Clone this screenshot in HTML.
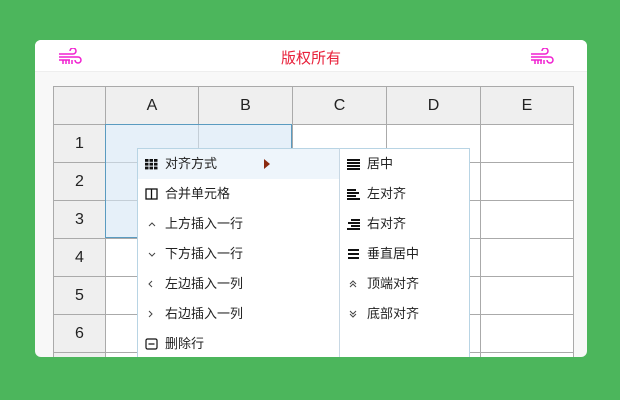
<!DOCTYPE html>
<html><head><meta charset="utf-8"><style>
body{margin:0;width:620px;height:400px;background:#4cb65c;position:relative;overflow:hidden;font-family:"Liberation Sans","Microsoft YaHei","Noto Sans CJK SC",sans-serif;}
.card{position:absolute;left:35px;top:40px;width:552px;height:317px;background:#f8f8f8;border-radius:6px;overflow:hidden}
.hdr{position:absolute;left:0;top:0;width:552px;height:31px;background:#fff;border-bottom:1px solid #eee}
.title{position:absolute;left:0;right:0;top:7px;text-align:center;color:#e8203a;font-size:15px}
table{position:absolute;left:18px;top:46px;border-collapse:collapse;background:#fff}
td{border:1px solid #aaa;height:37px;padding:0;text-align:center;font-size:16px;color:#222}
.h{background:#efefef}
.sel{position:absolute;left:70px;top:84px;width:185px;height:112px;border:1px solid #5a9bc0;background:rgba(214,230,245,.6)}
.menu{position:absolute;left:102px;top:108px;width:201px;height:230px;background:#fff;border:1px solid #b8d4e4}
.sub{position:absolute;left:304px;top:108px;width:129px;height:230px;background:#fff;border:1px solid #b8d4e4;border-left:1px solid #c8d8e4}
.it{position:absolute;left:0;height:30px;line-height:30px;font-size:13px;color:#222;white-space:nowrap}
.ic{display:inline-block;width:14px;height:30px;margin-left:7px;margin-right:6px;vertical-align:top;position:relative}
.ic svg{position:absolute;left:0;top:9px}
</style></head><body>
<div class="card">
<div class="hdr">
<svg style="position:absolute;left:23px;top:8px" width="26" height="18" viewBox="0 0 26 18" fill="none" stroke="#f020d0" stroke-width="1.5"><path d="M1 6h14a3 3 0 1 0-3-3M1 9h19a3 3 0 1 1-3 3M1 12h11"/><path d="M5 12v4M8 12v4M11 12v4M14 12v4"/></svg>
<div class="title">版权所有</div>
<svg style="position:absolute;left:495px;top:8px" width="26" height="18" viewBox="0 0 26 18" fill="none" stroke="#f020d0" stroke-width="1.5"><path d="M1 6h14a3 3 0 1 0-3-3M1 9h19a3 3 0 1 1-3 3M1 12h11"/><path d="M5 12v4M8 12v4M11 12v4M14 12v4"/></svg>
</div>
<table>
<tr><td class="h" style="width:51px"></td><td class="h" style="width:92px">A</td><td class="h" style="width:93px">B</td><td class="h" style="width:93px">C</td><td class="h" style="width:93px">D</td><td class="h" style="width:92px">E</td></tr>
<tr><td class="h">1</td><td></td><td></td><td></td><td></td><td></td></tr>
<tr><td class="h">2</td><td></td><td></td><td></td><td></td><td></td></tr>
<tr><td class="h">3</td><td></td><td></td><td></td><td></td><td></td></tr>
<tr><td class="h">4</td><td></td><td></td><td></td><td></td><td></td></tr>
<tr><td class="h">5</td><td></td><td></td><td></td><td></td><td></td></tr>
<tr><td class="h">6</td><td></td><td></td><td></td><td></td><td></td></tr>
<tr><td class="h">7</td><td></td><td></td><td></td><td></td><td></td></tr>
</table>
<div class="sel"></div>
<div class="menu">
<div class="it" style="top:0;width:201px;background:#eef5fb"><span class="ic"><svg width="13" height="12" fill="#111"><rect x="0" y="1" width="3.5" height="2.8"/><rect x="4.5" y="1" width="3.5" height="2.8"/><rect x="9" y="1" width="3.5" height="2.8"/><rect x="0" y="4.8" width="3.5" height="2.8"/><rect x="4.5" y="4.8" width="3.5" height="2.8"/><rect x="9" y="4.8" width="3.5" height="2.8"/><rect x="0" y="8.6" width="3.5" height="2.8"/><rect x="4.5" y="8.6" width="3.5" height="2.8"/><rect x="9" y="8.6" width="3.5" height="2.8"/></svg></span>对齐方式<svg style="position:absolute;left:126px;top:10px" width="6" height="10"><path d="M0 0L6 5L0 10Z" fill="#8b2a10"/></svg></div>
<div class="it" style="top:30px"><span class="ic"><svg width="13" height="12" fill="none" stroke="#111" stroke-width="1.3"><rect x="1" y="1" width="11" height="10"/><path d="M6.5 1v10"/></svg></span>合并单元格</div>
<div class="it" style="top:60px"><span class="ic"><svg width="13" height="12" fill="none" stroke="#444" stroke-width="1"><path d="M4 8l3-3 3 3"/></svg></span>上方插入一行</div>
<div class="it" style="top:90px"><span class="ic"><svg width="13" height="12" fill="none" stroke="#444" stroke-width="1"><path d="M4 5l3 3 3-3"/></svg></span>下方插入一行</div>
<div class="it" style="top:120px"><span class="ic"><svg width="13" height="12" fill="none" stroke="#444" stroke-width="1"><path d="M7 3L4 6l3 3"/></svg></span>左边插入一列</div>
<div class="it" style="top:150px"><span class="ic"><svg width="13" height="12" fill="none" stroke="#444" stroke-width="1"><path d="M4 3l3 3-3 3"/></svg></span>右边插入一列</div>
<div class="it" style="top:180px"><span class="ic"><svg width="13" height="12" fill="none" stroke="#111" stroke-width="1.2"><rect x="1" y="1" width="11" height="10" rx="1.5"/><path d="M3.5 6h6"/></svg></span>删除行</div>
</div>
<div class="sub">
<div class="it" style="top:0"><span class="ic"><svg width="13" height="12" fill="#111"><rect x="0" y="1" width="13" height="2"/><rect x="0" y="4" width="13" height="2"/><rect x="0" y="7" width="13" height="2"/><rect x="0" y="10" width="13" height="2"/></svg></span>居中</div>
<div class="it" style="top:30px"><span class="ic"><svg width="13" height="12" fill="#111"><rect x="0" y="1" width="9" height="2"/><rect x="0" y="4" width="12" height="2"/><rect x="0" y="7" width="9" height="2"/><rect x="0" y="10" width="13" height="2"/></svg></span>左对齐</div>
<div class="it" style="top:60px"><span class="ic"><svg width="13" height="12" fill="#111"><rect x="4" y="1" width="9" height="2"/><rect x="1" y="4" width="12" height="2"/><rect x="4" y="7" width="9" height="2"/><rect x="0" y="10" width="13" height="2"/></svg></span>右对齐</div>
<div class="it" style="top:90px"><span class="ic"><svg width="13" height="12" fill="#111"><rect x="1" y="1" width="11" height="2"/><rect x="1" y="5" width="11" height="2"/><rect x="1" y="9" width="11" height="2"/></svg></span>垂直居中</div>
<div class="it" style="top:120px"><span class="ic"><svg width="13" height="12" fill="none" stroke="#444" stroke-width="1"><path d="M3 6l3-3 3 3M3 9l3-3 3 3"/></svg></span>顶端对齐</div>
<div class="it" style="top:150px"><span class="ic"><svg width="13" height="12" fill="none" stroke="#444" stroke-width="1"><path d="M3 3l3 3 3-3M3 6l3 3 3-3"/></svg></span>底部对齐</div>
</div>
</div>
</body></html>
